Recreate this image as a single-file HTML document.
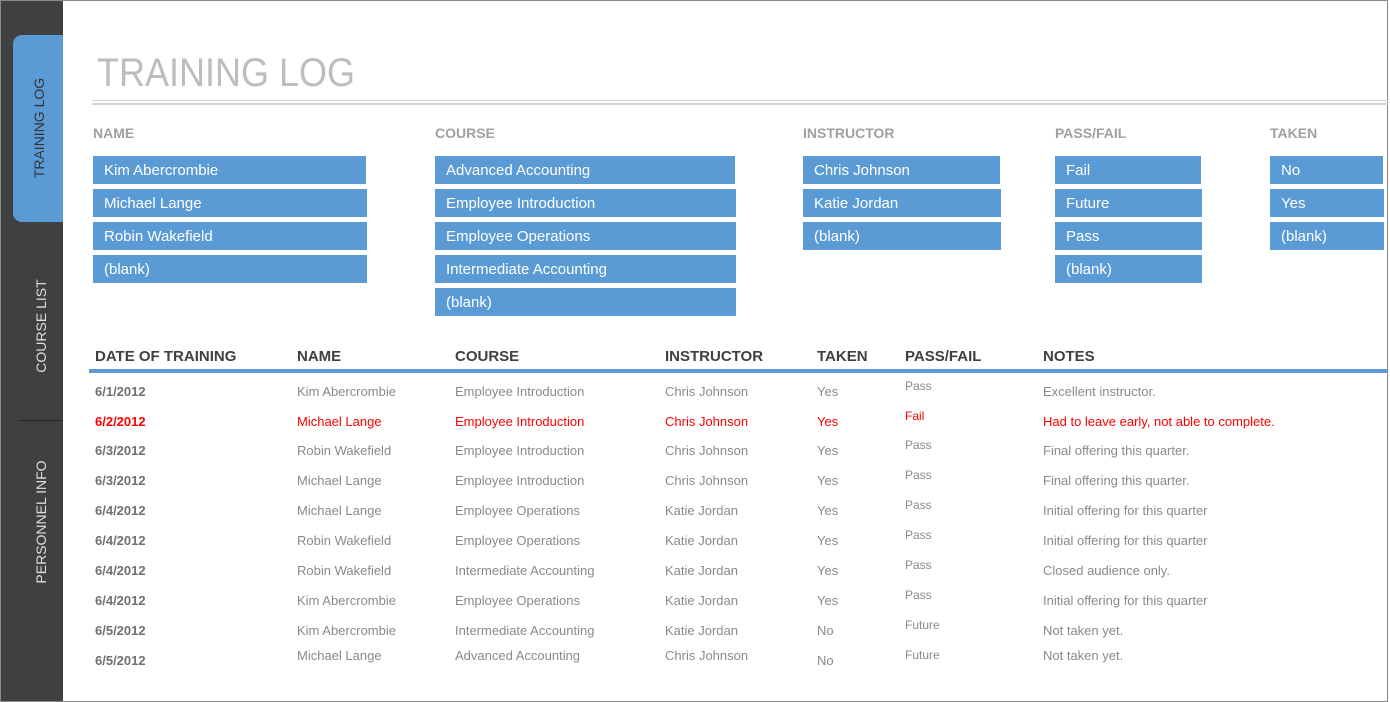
<!DOCTYPE html>
<html><head><style>
*{margin:0;padding:0;box-sizing:border-box}
body{width:1390px;height:702px;position:relative;overflow:hidden;background:#fff;font-family:"Liberation Sans",sans-serif}
.a{position:absolute;white-space:nowrap}
.frame{position:absolute;left:0;top:0;width:1388px;height:702px;border:1px solid #8a8a8a}
.side{position:absolute;left:1px;top:1px;width:62px;height:700px;background:#404040}
.tab{position:absolute;left:13px;top:35px;width:50px;height:187px;background:#5b9bd5;border-radius:9px 0 0 9px}
.vt{position:absolute;transform:rotate(-90deg);transform-origin:center;font-size:14px;color:#fff;white-space:nowrap;width:200px;text-align:center}
.sh{font-size:14px;font-weight:bold;color:#a0a0a0;top:125px}
.b{position:absolute;height:28px;background:#5b9bd5;color:#fff;font-size:15px;line-height:30px;padding-left:11px;white-space:nowrap}
.th{font-size:15px;font-weight:bold;color:#404040;top:348px}
.c{font-size:13px;color:#8a8a8a}
.d{font-size:13px;font-weight:bold;color:#707070}
.r{color:#f00!important}
</style></head><body>
<div class="frame"></div>
<div class="side"></div>
<div class="tab"></div>
<div class="vt" style="left:-61px;top:120px;color:#333">TRAINING LOG</div>
<div class="vt" style="left:-59px;top:318px;color:#ddd">COURSE LIST</div>
<div style="position:absolute;left:19px;top:420px;width:44px;height:1px;background:#222"></div>
<div class="vt" style="left:-59px;top:514px;color:#ddd">PERSONNEL INFO</div>

<div class="a" style="left:97px;top:51px;font-size:40px;color:#bdbdbd;transform:scaleX(0.9);transform-origin:left top">TRAINING LOG</div>
<div style="position:absolute;left:92px;top:100px;width:1296px;height:1px;background:#d6d6d6"></div>
<div style="position:absolute;left:92px;top:103px;width:1296px;height:2px;background:#d6d6d6"></div>

<div class="a sh" style="left:93px">NAME</div>
<div class="a sh" style="left:435px">COURSE</div>
<div class="a sh" style="left:803px">INSTRUCTOR</div>
<div class="a sh" style="left:1055px">PASS/FAIL</div>
<div class="a sh" style="left:1270px">TAKEN</div>

<div class="b" style="left:93px;top:156px;width:273px">Kim Abercrombie</div>
<div class="b" style="left:93px;top:189px;width:274px">Michael Lange</div>
<div class="b" style="left:93px;top:222px;width:274px">Robin Wakefield</div>
<div class="b" style="left:93px;top:255px;width:274px">(blank)</div>

<div class="b" style="left:435px;top:156px;width:300px">Advanced Accounting</div>
<div class="b" style="left:435px;top:189px;width:301px">Employee Introduction</div>
<div class="b" style="left:435px;top:222px;width:301px">Employee Operations</div>
<div class="b" style="left:435px;top:255px;width:301px">Intermediate Accounting</div>
<div class="b" style="left:435px;top:288px;width:301px">(blank)</div>

<div class="b" style="left:803px;top:156px;width:197px">Chris Johnson</div>
<div class="b" style="left:803px;top:189px;width:198px">Katie Jordan</div>
<div class="b" style="left:803px;top:222px;width:198px">(blank)</div>

<div class="b" style="left:1055px;top:156px;width:146px">Fail</div>
<div class="b" style="left:1055px;top:189px;width:147px">Future</div>
<div class="b" style="left:1055px;top:222px;width:147px">Pass</div>
<div class="b" style="left:1055px;top:255px;width:147px">(blank)</div>

<div class="b" style="left:1270px;top:156px;width:113px">No</div>
<div class="b" style="left:1270px;top:189px;width:114px">Yes</div>
<div class="b" style="left:1270px;top:222px;width:114px">(blank)</div>

<div class="a th" style="left:95px">DATE OF TRAINING</div>
<div class="a th" style="left:297px">NAME</div>
<div class="a th" style="left:455px">COURSE</div>
<div class="a th" style="left:665px">INSTRUCTOR</div>
<div class="a th" style="left:817px">TAKEN</div>
<div class="a th" style="left:905px">PASS/FAIL</div>
<div class="a th" style="left:1043px">NOTES</div>
<div style="position:absolute;left:89px;top:369px;width:1299px;height:4px;background:#5b9bd5"></div>

<div id="rows"></div>
<script>
var R=[
["6/1/2012","Kim Abercrombie","Employee Introduction","Chris Johnson","Yes","Pass","Excellent instructor.",0],
["6/2/2012","Michael Lange","Employee Introduction","Chris Johnson","Yes","Fail","Had to leave early, not able to complete.",1],
["6/3/2012","Robin Wakefield","Employee Introduction","Chris Johnson","Yes","Pass","Final offering this quarter.",0],
["6/3/2012","Michael Lange","Employee Introduction","Chris Johnson","Yes","Pass","Final offering this quarter.",0],
["6/4/2012","Michael Lange","Employee Operations","Katie Jordan","Yes","Pass","Initial offering for this quarter",0],
["6/4/2012","Robin Wakefield","Employee Operations","Katie Jordan","Yes","Pass","Initial offering for this quarter",0],
["6/4/2012","Robin Wakefield","Intermediate Accounting","Katie Jordan","Yes","Pass","Closed audience only.",0],
["6/4/2012","Kim Abercrombie","Employee Operations","Katie Jordan","Yes","Pass","Initial offering for this quarter",0],
["6/5/2012","Kim Abercrombie","Intermediate Accounting","Katie Jordan","No","Future","Not taken yet.",0],
["6/5/2012","Michael Lange","Advanced Accounting","Chris Johnson","No","Future","Not taken yet.",0]];
var tops=[384,414,443,473,503,533,563,593,623,653];
var h="";
R.forEach(function(r,i){var t=tops[i],rc=r[7]?" r":"";
var o=(i==9)?-5:0;
h+='<div class="a d'+rc+'" style="left:95px;top:'+t+'px">'+r[0]+'</div>';
h+='<div class="a c'+rc+'" style="left:297px;top:'+(t+o)+'px">'+r[1]+'</div>';
h+='<div class="a c'+rc+'" style="left:455px;top:'+(t+o)+'px">'+r[2]+'</div>';
h+='<div class="a c'+rc+'" style="left:665px;top:'+(t+o)+'px">'+r[3]+'</div>';
h+='<div class="a c'+rc+'" style="left:817px;top:'+t+'px">'+r[4]+'</div>';
h+='<div class="a c'+rc+'" style="left:905px;top:'+(t-5)+'px;font-size:12px">'+r[5]+'</div>';
h+='<div class="a c'+rc+'" style="left:1043px;top:'+(t+o)+'px">'+r[6]+'</div>';});
document.getElementById("rows").innerHTML=h;
</script>
</body></html>
